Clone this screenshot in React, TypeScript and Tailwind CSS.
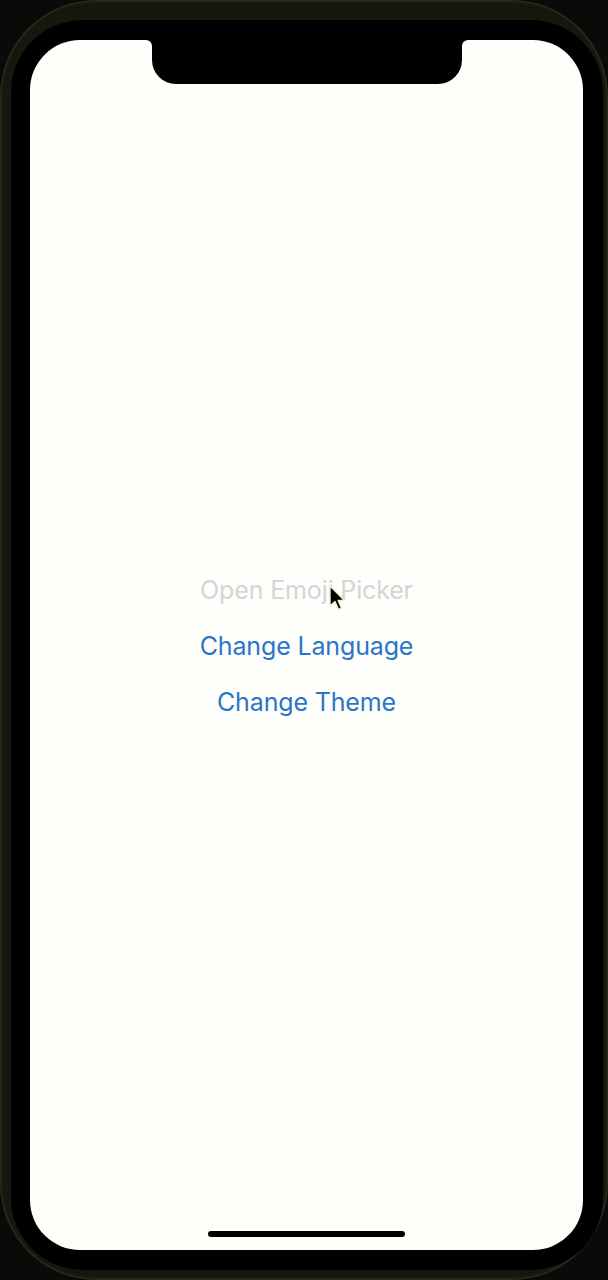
import React from "react";

function Notch() {
  return (
    <svg
      className="absolute top-0 left-[116px]"
      width="322"
      height="44"
      viewBox="0 0 322 44"
    >
      <path
        d="M0 0 A6 6 0 0 1 6 6 V20 A24 24 0 0 0 30 44 H292 A24 24 0 0 0 316 20 V6 A6 6 0 0 1 322 0 Z"
        fill="#000"
      />
    </svg>
  );
}

function Cursor() {
  return (
    <svg
      className="absolute left-[298px] top-[545px]"
      width="20"
      height="28"
      viewBox="0 0 20 28"
    >
      <path
        d="M2 1 L2 21 L7 16.5 L10.5 24.5 L13.5 23.2 L10.2 15.5 L16.5 15.5 Z"
        fill="#000"
        stroke="#f4f0c8"
        strokeWidth="1.4"
        strokeLinejoin="round"
      />
    </svg>
  );
}

export default function App() {
  return (
    <div className="w-[608px] h-[1280px] bg-[#0a0a08] overflow-hidden">
      <div className="w-[608px] h-[1280px] rounded-[96px] bg-[#17170e] border-2 border-[#26261e] pt-[18px] pl-[9px] pr-[3px] pb-[8px] flex">
        <div className="flex-1 rounded-[72px] bg-black pt-[20px] pl-[19px] pr-[20px] pb-[20px] flex">
          <div
            className="relative flex-1 rounded-[50px] bg-[#fefefb] flex flex-col items-center justify-center"
            style={{ fontFamily: "Inter, 'Noto Sans', sans-serif" }}
          >
            <Notch />
            <div className="flex flex-col items-center pt-[2px] text-[25px] leading-[56px] tracking-[-0.15px]">
              <span className="text-[#cfd8d8]">Open Emoji Picker</span>
              <span className="text-[#2a76c8]">Change Language</span>
              <span className="text-[#2a76c8]">Change Theme</span>
            </div>
            <Cursor />
            <div className="absolute bottom-[13px] left-[178px] w-[197px] h-[6px] rounded-full bg-black" />
          </div>
        </div>
      </div>
    </div>
  );
}
